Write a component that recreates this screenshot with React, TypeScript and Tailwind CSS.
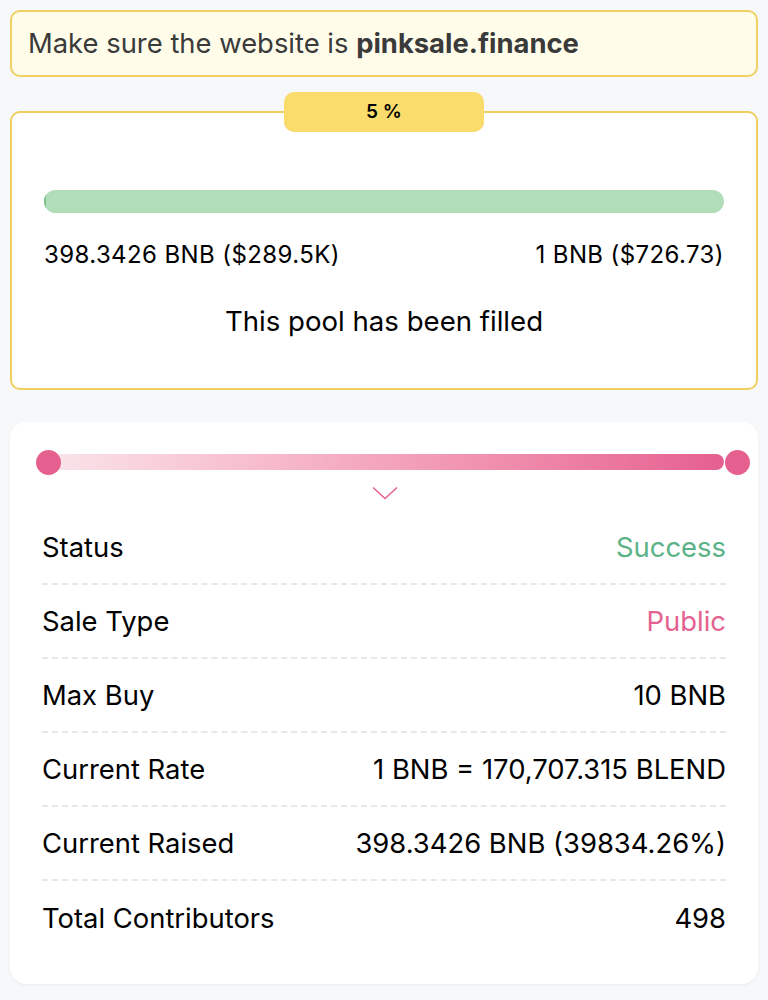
const rows: { label: string; value: string; tone?: string }[] = [
  { label: "Status", value: "Success", tone: "text-[#5bb287]" },
  { label: "Sale Type", value: "Public", tone: "text-[#e4628f]" },
  { label: "Max Buy", value: "10 BNB" },
  { label: "Current Rate", value: "1 BNB = 170,707.315 BLEND" },
  { label: "Current Raised", value: "398.3426 BNB (39834.26%)" },
  { label: "Total Contributors", value: "498" },
];

export default function App() {
  return (
    <div className="min-h-[1000px] w-[768px] bg-[#f7f8fa] px-[10px] pt-[10px] font-['Inter',sans-serif] text-black antialiased">
      {/* Warning */}
      <div className="flex h-[67px] items-center rounded-[10px] border-2 border-[#f0cf63] bg-[#fffdea] px-[16px] text-[27.4px] text-[#3a3a3a]">
        <span>
          Make sure the website is <b className="font-bold">pinksale.finance</b>
        </span>
      </div>

      {/* Progress */}
      <div className="relative mt-[34px] rounded-[10px] border-2 border-[#f0cd5c] bg-white px-[32px] pb-[46px] pt-[77px]">
        <div className="absolute left-1/2 top-[-21px] flex h-[40px] w-[200px] -translate-x-1/2 items-center justify-center rounded-[10px] bg-[#f9dc6c] text-[19px] font-semibold">
          5 %
        </div>
        <div className="h-[23px] w-full overflow-hidden rounded-full bg-[#b1ddb8]">
          <div className="h-full w-[2px] bg-[#7cc48b]" />
        </div>
        <div className="mt-[24px] flex justify-between text-[24px] tracking-[0.4px]">
          <span>398.3426 BNB ($289.5K)</span>
          <span>1 BNB ($726.73)</span>
        </div>
        <p className="mt-[28px] text-center text-[27.6px]">This pool has been filled</p>
      </div>

      {/* Details */}
      <div className="mt-[32px] rounded-[16px] bg-white px-[32px] pb-[29px] pt-[28px] shadow-[0_1px_3px_rgba(0,0,0,0.06)]">
        <div className="relative h-[25px]">
          <div className="absolute left-[6px] right-[2px] top-[4px] h-[16px] rounded-full bg-gradient-to-r from-[#f9e4ea] to-[#e55f90]" />
          <div className="absolute left-[-6px] top-0 h-[25px] w-[25px] rounded-full bg-[#e5608f]" />
          <div className="absolute right-[-24px] top-0 h-[25px] w-[25px] rounded-full bg-[#e5608f]" />
        </div>
        <div className="mt-[11px] flex justify-center pl-[2px]">
          <svg width="26" height="14" viewBox="0 0 26 14" fill="none">
            <path d="M1 1.5L13 12.5L25 1.5" stroke="#e5608f" strokeWidth="1.5" />
          </svg>
        </div>
        <div className="mt-[11px]">
          {rows.map((r, i) => (
            <div
              key={r.label}
              className={`flex h-[74px] items-center justify-between text-[27.4px] ${
                i < rows.length - 1 ? "border-b-2 border-dashed border-[#e8e8e8]" : ""
              }`}
            >
              <span>{r.label}</span>
              <span className={r.tone}>{r.value}</span>
            </div>
          ))}
        </div>
      </div>
    </div>
  );
}
